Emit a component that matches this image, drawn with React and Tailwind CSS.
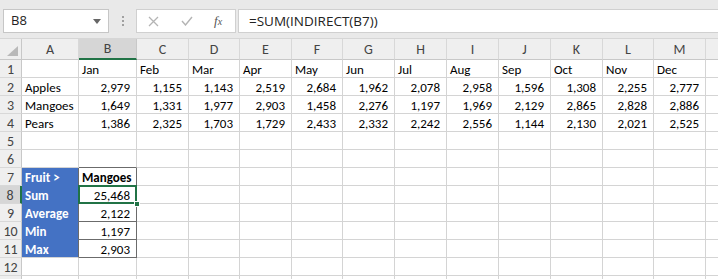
import React from 'react';

const months = ['Jan', 'Feb', 'Mar', 'Apr', 'May', 'Jun', 'Jul', 'Aug', 'Sep', 'Oct', 'Nov', 'Dec'];
const letters = ['A', 'B', 'C', 'D', 'E', 'F', 'G', 'H', 'I', 'J', 'K', 'L', 'M', ''];

const fruits = {
  2: ['Apples', ['2,979', '1,155', '1,143', '2,519', '2,684', '1,962', '2,078', '2,958', '1,596', '1,308', '2,255', '2,777']],
  3: ['Mangoes', ['1,649', '1,331', '1,977', '2,903', '1,458', '2,276', '1,197', '1,969', '2,129', '2,865', '2,828', '2,886']],
  4: ['Pears', ['1,386', '2,325', '1,703', '1,729', '2,433', '2,332', '2,242', '2,556', '1,144', '2,130', '2,021', '2,525']],
};

const stats = {
  8: ['Sum', '25,468'],
  9: ['Average', '2,122'],
  10: ['Min', '1,197'],
  11: ['Max', '2,903'],
};

const FormulaBar = () => (
  <div className="h-[39px] bg-[#e9e9e9] border-b border-[#d6d6d6] flex items-start pt-[9px] pl-[3px] font-['Segoe_UI','Open_Sans',sans-serif]">
    {/* Name box */}
    <div className="w-[106px] h-[24px] bg-white border border-[#c6c6c6] flex items-center justify-between pl-[7px] pr-[7px]">
      <span className="text-[13px] text-[#222]">B8</span>
      <svg width="8" height="5" viewBox="0 0 8 5"><path d="M0 0h8L4 5z" fill="#666" /></svg>
    </div>
    <div className="w-[27px] h-[24px] flex flex-col items-center justify-center gap-[2px]">
      <span className="w-[2px] h-[2px] bg-[#a0a0a0]" />
      <span className="w-[2px] h-[2px] bg-[#a0a0a0]" />
      <span className="w-[2px] h-[2px] bg-[#a0a0a0]" />
    </div>
    {/* Cancel / enter / fx */}
    <div className="w-[100px] h-[24px] bg-white border border-[#d0d0d0] flex items-center">
      <svg className="ml-[11px]" width="11" height="11" viewBox="0 0 11 11">
        <path d="M1 1l9 9M10 1l-9 9" stroke="#b4b4b4" strokeWidth="1.3" />
      </svg>
      <svg className="ml-[22px]" width="12" height="10" viewBox="0 0 12 10">
        <path d="M1 5l3.5 4L11 1" stroke="#b4b4b4" strokeWidth="1.4" fill="none" />
      </svg>
      <span className="ml-[21px] text-[13px] italic text-[#555] font-['Liberation_Serif',serif]">
        f<span className="text-[10px]">x</span>
      </span>
    </div>
    {/* Formula input */}
    <div className="ml-[2px] flex-1 h-[24px] bg-white border border-[#d0d0d0] border-r-0 flex items-center pl-[10px]">
      <span className="text-[13.5px] text-[#222]">=SUM(INDIRECT(B7))</span>
    </div>
  </div>
);

const Cell = ({ className = '', children }) => (
  <div className={`flex items-center pt-[2px] overflow-hidden whitespace-nowrap ${className}`}>{children}</div>
);

const renderCell = (r, c) => {
  const last = c === 13;
  let border = last ? 'border-b border-[#d4d4d4]' : 'border-r border-b border-[#d4d4d4]';
  let extra = '';
  let content = null;
  let right = false;

  if (r === 1 && c >= 1 && c <= 12) content = months[c - 1];
  if (fruits[r]) {
    if (c === 0) content = fruits[r][0];
    else if (c <= 12) {
      content = fruits[r][1][c - 1];
      right = true;
    }
  }
  if (r === 6 && c === 1) border = 'border-r border-b border-r-[#d4d4d4] border-b-[#6b6b6b]';
  if (r >= 7 && r <= 11 && c === 0) {
    content = r === 7 ? 'Fruit >' : stats[r][0];
    extra = 'bg-[#4472c4] text-white font-bold';
    border = r === 11
      ? 'border-r border-b border-r-[#6b6b6b] border-b-[#d4d4d4]'
      : 'border-r border-b border-r-[#6b6b6b] border-b-[#4472c4]';
  }
  if (r >= 7 && r <= 11 && c === 1) {
    border = 'border-r border-b border-[#6b6b6b]';
    if (r === 7) {
      content = 'Mangoes';
      extra = 'font-bold';
    } else {
      content = stats[r][1];
      right = true;
    }
  }

  const isSelected = r === 8 && c === 1;

  return (
    <Cell
      key={`${r}-${c}`}
      className={`${border} ${extra} ${right ? 'justify-end pr-[6px]' : 'pl-[3px]'} ${isSelected ? 'relative overflow-visible' : ''}`}
    >
      {content}
      {isSelected && (
        <>
          <div className="absolute -left-[1px] -top-[1px] -right-[1px] -bottom-[1px] border-2 border-[#217346]" />
          <div className="absolute -right-[4px] -bottom-[4px] w-[6px] h-[6px] bg-[#217346] border border-white" />
        </>
      )}
    </Cell>
  );
};

const App = () => {
  const rowNums = Array.from({ length: 13 }, (_, i) => i + 1);

  return (
    <div className="w-[718px] h-[279px] overflow-hidden bg-white">
      <FormulaBar />
      <div className="grid grid-cols-[22px_57px_58px_52px_51px_52px_51px_52px_52px_52px_52px_52px_51px_52px_1fr] grid-rows-[21px] auto-rows-[18px] text-[13px] text-black font-[Carlito,Calibri,Roboto,sans-serif]">
        {/* Corner */}
        <div className="bg-[#efefef] border-r border-b border-[#c8c8c8] flex items-end justify-end pr-[3px] pb-[3px]">
          <svg width="11" height="10" viewBox="0 0 11 10"><path d="M11 0v10H0z" fill="#b9b9b9" /></svg>
        </div>
        {letters.map((l, i) => (
          <div
            key={`h-${i}`}
            className={`flex items-center justify-center text-[14px] text-[#444] ${
              i === 1
                ? 'bg-[#d6d6d6] border-r border-[#c8c8c8] border-b-2 border-b-[#217346]'
                : `bg-[#efefef] border-b border-[#c8c8c8] ${i === 13 ? '' : 'border-r border-r-[#d8d8d8]'}`
            }`}
          >
            {l}
          </div>
        ))}
        {rowNums.map((r) => (
          <React.Fragment key={`r-${r}`}>
            <div
              className={`flex items-center justify-center pt-[2px] text-[14px] text-[#444] border-b border-[#d8d8d8] ${
                r === 8 ? 'bg-[#d6d6d6] border-r-2 border-r-[#217346]' : 'bg-[#efefef] border-r border-r-[#c8c8c8]'
              }`}
            >
              {r < 13 ? r : null}
            </div>
            {letters.map((_, c) => renderCell(r, c))}
          </React.Fragment>
        ))}
      </div>
    </div>
  );
};

export default App;
